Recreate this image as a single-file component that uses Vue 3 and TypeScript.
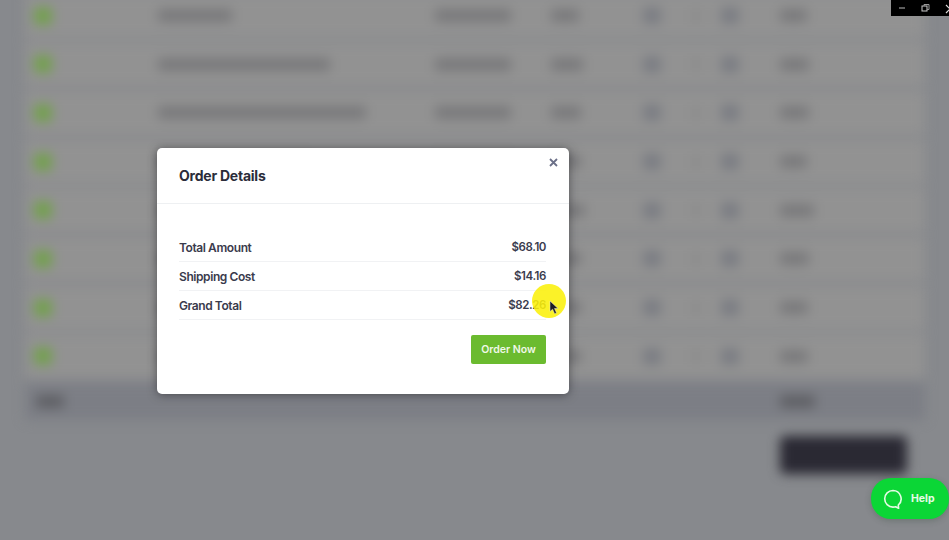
<script setup lang="ts">
interface Row { name: number; sku: number; price: number; total: number }
const rows: Row[] = [
  { name: 74, sku: 76, price: 28, total: 27 },
  { name: 172, sku: 76, price: 32, total: 29 },
  { name: 208, sku: 76, price: 30, total: 29 },
  { name: 150, sku: 76, price: 30, total: 27 },
  { name: 160, sku: 76, price: 34, total: 34 },
  { name: 120, sku: 76, price: 30, total: 29 },
  { name: 140, sku: 76, price: 30, total: 28 },
  { name: 130, sku: 76, price: 30, total: 28 },
]
const details = [
  { label: 'Total Amount', value: '$68.10' },
  { label: 'Shipping Cost', value: '$14.16' },
  { label: 'Grand Total', value: '$82.26' },
]
</script>

<template>
  <div class="page">
    <div class="backdrop">
      <div class="table">
        <div v-for="(r, i) in rows" :key="i" class="row">
          <span class="dot"></span>
          <span class="bar" :style="{ width: r.name + 'px' }"></span>
          <span class="bar" :style="{ width: r.sku + 'px' }"></span>
          <span class="bar" :style="{ width: r.price + 'px' }"></span>
          <span class="qty"></span>
          <span class="tick"></span>
          <span class="qty"></span>
          <span class="bar" :style="{ width: r.total + 'px' }"></span>
        </div>
        <div class="total-row">
          <span class="bar total-label"></span>
          <span class="bar total-sum"></span>
        </div>
        <div class="actions"><span class="dark-button"></span></div>
      </div>
    </div>

    <div class="window-bar">
      <svg width="58" height="16" viewBox="0 0 58 16">
        <path d="M8 8h6" stroke="#bbb" stroke-width="1" fill="none" />
        <rect x="31" y="6" width="5" height="5" stroke="#ccc" fill="none" />
        <path d="M33 6V4.500h5v5h-2" stroke="#999" fill="none" />
        <path d="M55 5l4 4-4 4" stroke="#ddd" stroke-width="1.2" fill="none" />
      </svg>
    </div>

    <section class="modal">
      <header class="modal-head">
        <h2>Order Details</h2>
        <svg class="close" width="9" height="9" viewBox="0 0 9 9">
          <path d="M1 1l7 7M8 1L1 8" stroke="#6b7088" stroke-width="1.8" fill="none" />
        </svg>
      </header>
      <div class="modal-body">
        <div v-for="d in details" :key="d.label" class="detail">
          <span>{{ d.label }}</span>
          <span class="value">{{ d.value }}</span>
        </div>
        <div class="modal-foot"><button class="order">Order Now</button></div>
      </div>
    </section>

    <div class="highlight"></div>
    <svg class="cursor" width="10" height="15" viewBox="0 0 10 15">
      <path d="M1 1v10.500l2.600-2.300 2 4.500 1.900-.8-2-4.400H9L1 1z" fill="#1c1c24" stroke="#e8e8d0" stroke-width=".5" />
    </svg>

    <div class="help">
      <svg width="20" height="20" viewBox="0 0 20 20">
        <path d="M10 1.500a8.300 8.300 0 1 0 0 16.600c.9 0 1.800-.1 2.600-.4l3 1.600-.3-3.300a8.300 8.300 0 0 0-5.300-14.500z" fill="none" stroke="#e6fbe6" stroke-width="1.600" stroke-linejoin="round" />
      </svg>
      <span>Help</span>
    </div>
  </div>
</template>

<style>
body { margin: 0; }
</style>

<style scoped>
.page {
  position: relative;
  width: 949px;
  height: 540px;
  overflow: hidden;
  background: #87898d;
  font-family: Inter, "Noto Sans", sans-serif;
}
.backdrop {
  height: 100%;
  filter: blur(6px);
}
.table {
  margin: -6.5px 24px 0 25px;
  display: flex;
  flex-direction: column;
}
.row {
  display: grid;
  grid-template-columns: 124px 277px 116px 92px 47px 31px 59px 1fr;
  align-items: center;
  height: 44px;
  margin-bottom: 4.7px;
  padding-left: 9px;
  background: #929292;
}
.dot {
  width: 18px;
  height: 18px;
  border-radius: 4px;
  background: #74a04f;
}
.bar {
  display: block;
  height: 13px;
  border-radius: 3px;
  background: #79797b;
}
.qty {
  width: 18px;
  height: 17px;
  border-radius: 3px;
  background: #7b7d83;
}
.tick {
  width: 8px;
  height: 12px;
  background: #8a8a8a;
  margin-left: 2px;
}
.total-row {
  height: 37px;
  margin-top: -0.5px;
  background: #7c7e85;
  display: flex;
  align-items: center;
  padding-left: 11px;
}
.total-label { width: 28px; background: #5f6065; }
.total-sum { width: 35px; margin-left: 716px; background: #5f6065; }
.actions {
  display: flex;
  padding: 16px 0 0 755px;
}
.dark-button {
  width: 127px;
  height: 38px;
  border-radius: 5px;
  background: #2a2933;
}
.window-bar {
  position: absolute;
  top: 0;
  left: 891px;
  width: 58px;
  height: 16px;
  background: #000;
  display: flex;
}
.modal {
  position: absolute;
  left: 157px;
  top: 148px;
  width: 412px;
  height: 246px;
  background: #fff;
  border-radius: 5px;
  box-shadow: 0 1px 10px rgba(40, 40, 45, 0.6);
}
.modal-head {
  position: relative;
  height: 56px;
  box-sizing: border-box;
  padding: 19px 22px 0;
  border-bottom: 1px solid #eef0f2;
}
.modal-head h2 {
  margin: 0;
  font-size: 14px;
  line-height: 18px;
  font-weight: 700;
  letter-spacing: -0.23px;
  color: #2b2c3a;
}
.close {
  position: absolute;
  right: 11px;
  top: 10px;
}
.modal-body {
  padding: 28.5px 23px 0 22px;
}
.detail {
  display: flex;
  justify-content: space-between;
  align-items: center;
  height: 29.2px;
  padding-top: 1px;
  box-sizing: border-box;
  border-bottom: 1px solid #f1f2f4;
  font-size: 12px;
  font-weight: 600;
  letter-spacing: -0.42px;
  color: #3a3b4d;
}
.value {
  font-size: 11.5px;
}
.modal-foot {
  display: flex;
  justify-content: flex-end;
  padding-top: 15px;
}
.order {
  width: 75px;
  height: 29px;
  padding: 0;
  border: 0;
  border-radius: 2px;
  background: #6bbb2f;
  color: #f0f8e8;
  font-family: inherit;
  font-size: 10.5px;
  font-weight: 600;
}
.highlight {
  position: absolute;
  left: 532px;
  top: 284px;
  width: 34px;
  height: 34px;
  border-radius: 50%;
  background: rgba(250, 240, 10, 0.88);
}
.cursor {
  position: absolute;
  left: 549px;
  top: 300px;
}
.help {
  position: absolute;
  left: 871px;
  top: 478px;
  width: 78px;
  height: 41px;
  border-radius: 20px;
  background: #0bd636;
  box-shadow: 0 2px 6px rgba(30, 60, 40, 0.25);
  display: flex;
  align-items: center;
  gap: 8px;
  padding-left: 12px;
  box-sizing: border-box;
  color: #e6fbe6;
  font-size: 10.5px;
  font-weight: 700;
}
</style>
